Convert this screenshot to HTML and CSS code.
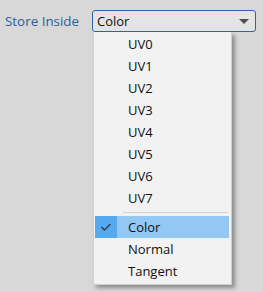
FILE: index.html
```html
<!DOCTYPE html>
<html>
<head>
    <meta charset="utf-8">
    <title>Store Inside</title>
    <link rel="stylesheet" href="styles.css">
</head>
<body>
    <div class="field">
        <label class="field-label">Store Inside</label>
        <div class="select">
            <span class="select-value">Color</span>
            <span class="select-arrow"></span>
        </div>
    </div>
    <ul class="menu">
        <li class="item">UV0</li>
        <li class="item">UV1</li>
        <li class="item">UV2</li>
        <li class="item">UV3</li>
        <li class="item">UV4</li>
        <li class="item">UV5</li>
        <li class="item">UV6</li>
        <li class="item">UV7</li>
        <li class="separator"></li>
        <li class="item selected">
            <span class="check">
                <svg width="12" height="10" viewBox="0 0 12 10"><path d="M1.5 5 L4.5 8 L10.5 2" fill="none" stroke="#2d3e52" stroke-width="1.4"/></svg>
            </span>Color
        </li>
        <li class="item">Normal</li>
        <li class="item">Tangent</li>
    </ul>
</body>
</html>
```

FILE: styles.css
```css
body {
    margin: 0;
    background-color: #d8d8d8;
    font-family: "Open Sans", "Noto Sans", sans-serif;
    font-size: 13px;
    color: #101010;
    position: relative;
    height: 292px;
}
.field {
    display: flex;
    align-items: center;
    padding: 10px 7px 0 5px;
}
.field-label {
    width: 87px;
    color: #2b5d9c;
    font-size: 13.4px;
}
.select {
    flex: 1;
    height: 20px;
    display: flex;
    align-items: center;
    justify-content: space-between;
    border: 1px solid #2f65a8;
    border-radius: 3px;
    background-color: #e4e4e4;
    padding: 0 6px 0 4px;
}
.select-arrow {
    width: 0;
    height: 0;
    border-left: 5px solid transparent;
    border-right: 5px solid transparent;
    border-top: 5px solid #505050;
}
.menu {
    position: absolute;
    left: 93px;
    top: 32px;
    width: 134px;
    margin: 0;
    padding: 1px 2px 2px 1px;
    list-style: none;
    background-color: #f2f2f2;
    border: 1px solid #cfcfcf;
    border-top: none;
    box-shadow: 3px 3px 4px rgba(0, 0, 0, 0.35);
}
.item {
    height: 22px;
    line-height: 22px;
    padding-left: 33px;
    position: relative;
}
.separator {
    height: 1px;
    margin: 3px 1px 3px 28px;
    background-color: #d4d4d4;
}
.selected {
    background-color: #93c8f5;
}
.check {
    position: absolute;
    left: 0;
    top: 0;
    width: 22px;
    height: 22px;
    background-color: #56a9ef;
    display: flex;
    align-items: center;
    justify-content: center;
}
```
